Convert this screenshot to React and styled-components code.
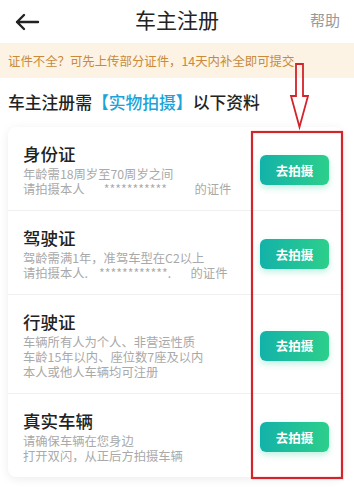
import React from 'react';
import styled, { createGlobalStyle } from 'styled-components';

const GlobalStyle = createGlobalStyle`
    html, body {
        margin: 0;
        padding: 0;
        background: #fff;
        overflow: hidden;
    }
    body {
        font-family: "Noto Sans CJK SC", "Noto Sans", sans-serif;
    }
`;

const Page = styled.div`
    position: relative;
    width: 354px;
    height: 501px;
    background: #fff;
    overflow: hidden;
`;

const Header = styled.div`
    display: grid;
    grid-template-columns: 60px 1fr 60px;
    align-items: center;
    height: 43px;
    padding: 0 14px;
    box-sizing: border-box;
    .back {
        display: flex;
        align-items: center;
    }
    .title {
        text-align: center;
        font-size: 21px;
        color: #222;
        line-height: 1;
        margin-top: -4px;
    }
    .help {
        text-align: right;
        font-size: 15px;
        color: #9a9a9a;
        margin-top: -4px;
    }
`;

const Banner = styled.div`
    height: 35px;
    display: flex;
    align-items: center;
    padding: 0 8px;
    background: #fcf3e4;
    color: #c98a3a;
    font-size: 12.4px;
    white-space: nowrap;
`;

const Heading = styled.div`
    padding: 13px 8px 0;
    height: 36px;
    box-sizing: border-box;
    font-size: 16.8px;
    font-weight: 500;
    color: #222;
    line-height: 22px;
    .hl {
        color: #1ca3d8;
    }
`;

const Card = styled.div`
    margin: 13px 11px 0 8px;
    background: #fff;
    border-radius: 8px;
    box-shadow: 0 2px 10px rgba(0, 0, 0, 0.08);
`;

const Row = styled.div`
    display: flex;
    align-items: center;
    justify-content: space-between;
    padding: 16px 14px 13px 15px;
    border-top: ${props => (props.first ? 'none' : '1px solid #f0f0f0')};
`;

const Info = styled.div`
    display: flex;
    flex-direction: column;
    .name {
        font-size: 17.5px;
        font-weight: 500;
        color: #222;
        line-height: 22px;
        margin-bottom: 2px;
    }
    .desc {
        font-size: 12.3px;
        color: #a9a9a9;
        line-height: 15px;
        white-space: pre;
    }
`;

const ShootButton = styled.button`
    width: 69px;
    height: 30px;
    border: none;
    border-radius: 6px;
    background: linear-gradient(90deg, #13b2a9, #2dcf8b);
    color: #fff;
    font-family: inherit;
    font-size: 12.5px;
    font-weight: 700;
    box-shadow: 0 3px 6px rgba(46, 207, 160, 0.3);
    padding: 0;
    flex-shrink: 0;
`;

const Markup = styled.svg`
    position: absolute;
    left: 0;
    top: 0;
    pointer-events: none;
`;

const items = [
    {
        name: '身份证',
        desc: ['年龄需18周岁至70周岁之间', '请拍摄本人       ***********          的证件'],
    },
    {
        name: '驾驶证',
        desc: ['驾龄需满1年，准驾车型在C2以上', '请拍摄本人.    ************.       的证件'],
    },
    {
        name: '行驶证',
        desc: ['车辆所有人为个人、非营运性质', '车龄15年以内、座位数7座及以内', '本人或他人车辆均可注册'],
    },
    {
        name: '真实车辆',
        desc: ['请确保车辆在您身边', '打开双闪，从正后方拍摄车辆'],
    },
];

export default function App() {
    return (
        <Page>
            <GlobalStyle />
            <Header>
                <div className={'back'}>
                    <svg width="26" height="18" viewBox="0 0 26 18">
                        <path d="M24 9H3M10 2L3 9l7 7" fill="none" stroke="#222" strokeWidth="2.4" strokeLinecap="round" strokeLinejoin="round" />
                    </svg>
                </div>
                <div className={'title'}>车主注册</div>
                <div className={'help'}>帮助</div>
            </Header>
            <Banner>证件不全？可先上传部分证件，14天内补全即可提交</Banner>
            <Heading>
                车主注册需<span className={'hl'}>【实物拍摄】</span>以下资料
            </Heading>
            <Card>
                {items.map((item, i) => (
                    <Row key={item.name} first={i === 0}>
                        <Info>
                            <div className={'name'}>{item.name}</div>
                            {item.desc.map(line => (
                                <div className={'desc'} key={line}>{line}</div>
                            ))}
                        </Info>
                        <ShootButton>去拍摄</ShootButton>
                    </Row>
                ))}
            </Card>
            <Markup width="354" height="501" viewBox="0 0 354 501">
                <path d="M296 64H303V96H308L299.5 127L291 96H296Z" fill="none" stroke="#d3232b" strokeWidth="1.8" strokeLinejoin="miter" />
                <rect x="252" y="132" width="90" height="346" fill="none" stroke="#d3232b" strokeWidth="2.2" />
            </Markup>
        </Page>
    );
}
